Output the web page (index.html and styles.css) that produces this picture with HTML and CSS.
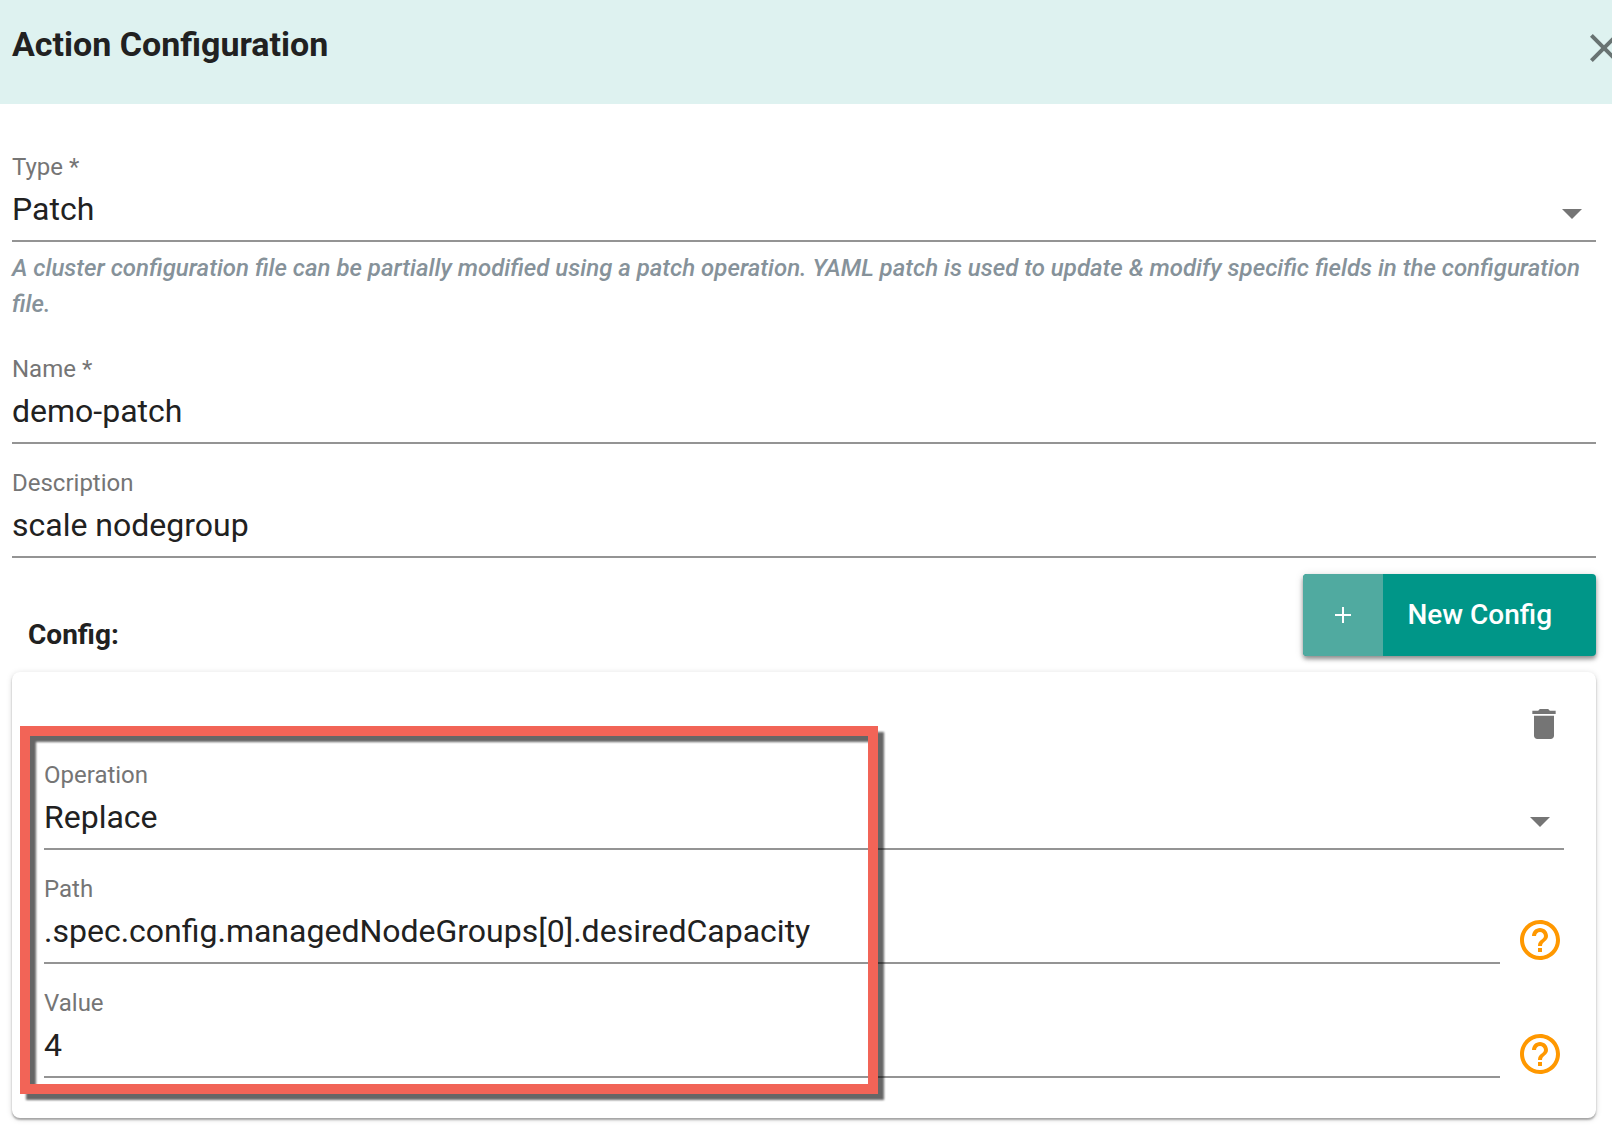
FILE: index.html
```html
<!DOCTYPE html>
<html lang="en">
<head>
<meta charset="utf-8">
<meta name="viewport" content="width=device-width, initial-scale=1">
<title>Action Configuration</title>
<link rel="stylesheet" href="styles.css">
</head>
<body>
<header class="dialog-header">
  <h1 class="dialog-title">Action Configuration</h1>
  <button class="icon-button close-button" type="button" aria-label="Close">
    <svg class="icon icon-large" viewBox="0 0 24 24"><path d="M19 6.41L17.59 5 12 10.59 6.41 5 5 6.41 10.59 12 5 17.59 6.41 19 12 13.41 17.59 19 19 17.59 13.41 12z"/></svg>
  </button>
</header>

<form class="dialog-form">
  <div class="field">
    <label class="field-label" for="type">Type *</label>
    <div class="select-wrap">
      <select class="field-input" id="type"><option>Patch</option></select>
      <svg class="icon icon-large select-arrow" viewBox="0 0 24 24"><path d="M7 10l5 5 5-5z"/></svg>
    </div>
    <p class="field-help">A cluster configuration file can be partially modified using a patch operation. YAML patch is used to update &amp; modify specific fields in the configuration file.</p>
  </div>

  <div class="field">
    <label class="field-label" for="name">Name *</label>
    <input class="field-input" id="name" type="text" value="demo-patch">
  </div>

  <div class="field">
    <label class="field-label" for="description">Description</label>
    <input class="field-input" id="description" type="text" value="scale nodegroup">
  </div>

  <section class="config">
    <div class="config-bar">
      <h2 class="config-title">Config:</h2>
      <button class="new-config" type="button">
        <span class="new-config-icon"><svg class="plus" viewBox="0 0 16 16"><path d="M8 0V16M0 8H16"/></svg></span>
        <span class="new-config-text">New Config</span>
      </button>
    </div>

    <div class="card">
      <div class="card-actions">
        <button class="icon-button" type="button" aria-label="Delete config">
          <svg class="icon icon-medium" viewBox="0 0 24 24"><path d="M6 19c0 1.100.9 2 2 2h8c1.100 0 2-.9 2-2V7H6v12zM19 4h-3.500l-1-1h-5l-1 1H5v2h14V4z"/></svg>
        </button>
      </div>

      <div class="card-fields">
        <div class="field">
          <label class="field-label" for="operation">Operation</label>
          <div class="select-wrap">
            <select class="field-input" id="operation"><option>Replace</option></select>
            <svg class="icon icon-large select-arrow" viewBox="0 0 24 24"><path d="M7 10l5 5 5-5z"/></svg>
          </div>
        </div>

        <div class="field-row">
          <div class="field">
            <label class="field-label" for="path">Path</label>
            <input class="field-input" id="path" type="text" value=".spec.config.managedNodeGroups[0].desiredCapacity">
          </div>
          <button class="icon-button help-button" type="button" aria-label="Help for path">
            <svg class="icon icon-large" viewBox="0 0 24 24"><path d="M11 18h2v-2h-2v2zm1-16C6.480 2 2 6.480 2 12s4.480 10 10 10 10-4.480 10-10S17.520 2 12 2zm0 18c-4.410 0-8-3.590-8-8s3.590-8 8-8 8 3.590 8 8-3.590 8-8 8zm0-14c-2.210 0-4 1.790-4 4h2c0-1.100.9-2 2-2s2 .9 2 2c0 2-3 1.750-3 5h2c0-2.250 3-2.500 3-5 0-2.210-1.790-4-4-4z"/></svg>
          </button>
        </div>

        <div class="field-row">
          <div class="field">
            <label class="field-label" for="value">Value</label>
            <input class="field-input" id="value" type="text" value="4">
          </div>
          <button class="icon-button help-button" type="button" aria-label="Help for value">
            <svg class="icon icon-large" viewBox="0 0 24 24"><path d="M11 18h2v-2h-2v2zm1-16C6.480 2 2 6.480 2 12s4.480 10 10 10 10-4.480 10-10S17.520 2 12 2zm0 18c-4.410 0-8-3.590-8-8s3.590-8 8-8 8 3.590 8 8-3.590 8-8 8zm0-14c-2.210 0-4 1.790-4 4h2c0-1.100.9-2 2-2s2 .9 2 2c0 2-3 1.750-3 5h2c0-2.250 3-2.500 3-5 0-2.210-1.790-4-4-4z"/></svg>
          </button>
        </div>
      </div>
      <div class="highlight"></div>
    </div>
  </section>
</form>
</body>
</html>
```
FILE: styles.css
```css
* {
  box-sizing: border-box;
}

body {
  margin: 0;
  overflow-x: hidden;
  background: #fff;
  color: #212121;
  font-family: Roboto, "Liberation Sans", sans-serif;
  font-size: 32px;
}

h1,
h2,
p {
  margin: 0;
}

button,
input,
select {
  font: inherit;
  color: inherit;
}

.dialog-header {
  display: flex;
  justify-content: space-between;
  align-items: flex-start;
  padding: 24px 0 32px 12px;
  background: #def2f0;
}

.dialog-title {
  font-size: 34px;
  line-height: 40px;
  font-weight: 700;
}

.icon-button {
  display: flex;
  padding: 0;
  border: 0;
  background: none;
  color: #757575;
  cursor: pointer;
}

/* The close button hangs over the right edge of the panel. */
.close-button {
  margin-right: -16px;
  color: #687372;
}

.icon {
  display: block;
  flex: none;
  fill: currentColor;
}

.icon-medium {
  width: 40px;
  height: 40px;
}

.icon-large {
  width: 48px;
  height: 48px;
}

.dialog-form {
  display: flex;
  flex-direction: column;
  gap: 28px;
  padding: 52px 16px 16px 12px;
}

.field {
  display: flex;
  flex-direction: column;
  flex: 1;
  min-width: 0;
}

.field-label {
  color: #757575;
  font-size: 24px;
  line-height: 22px;
}

.field-input {
  display: block;
  width: 100%;
  height: 64px;
  margin: 0;
  padding: 0;
  border: 0;
  border-bottom: 2px solid #949494;
  border-radius: 0;
  outline: 0;
  background: none;
  appearance: none;
}

.select-wrap {
  position: relative;
}

.select-arrow {
  position: absolute;
  top: 11px;
  right: 0;
  color: #757575;
  pointer-events: none;
}

.field-help {
  padding: 8px 0;
  color: #86929a;
  font-size: 24px;
  line-height: 36px;
  font-style: italic;
  font-weight: 500;
}

.config {
  display: flex;
  flex-direction: column;
  gap: 16px;
  margin-top: -12px;
}

.config-bar {
  display: flex;
  justify-content: space-between;
  align-items: flex-end;
}

.config-title {
  padding: 0 16px 4px;
  font-size: 28px;
  line-height: 34px;
  font-weight: 700;
}

.new-config {
  display: flex;
  min-height: 82px;
  padding: 0;
  overflow: hidden;
  border: 0;
  border-radius: 4px;
  background: #009688;
  box-shadow: 0 3px 4px rgba(0, 0, 0, 0.4), 0 1px 10px rgba(0, 0, 0, 0.12);
  color: #fff;
  font-size: 28px;
  font-weight: 500;
  cursor: pointer;
}

.new-config-icon {
  display: flex;
  justify-content: center;
  align-items: center;
  width: 80px;
  background: #50aaa0;
}

.plus {
  width: 16px;
  height: 16px;
  stroke: #fff;
  stroke-width: 2;
}

.new-config-text {
  align-self: center;
  padding: 0 44px 2px 24px;
}

.card {
  position: relative;
  padding: 32px 32px 40px;
  border-radius: 8px;
  background: #fff;
  box-shadow: 0 2px 2px rgba(0, 0, 0, 0.3), 0 1px 6px rgba(0, 0, 0, 0.14);
}

.card-actions {
  display: flex;
  justify-content: flex-end;
}

.card-fields {
  display: flex;
  flex-direction: column;
  gap: 28px;
  margin-top: 20px;
}

.field-row {
  display: flex;
  align-items: flex-end;
  gap: 16px;
}

.help-button {
  color: #ff9800;
}

/* Callout frame drawn over the patch fields. */
.highlight {
  position: absolute;
  top: 54px;
  bottom: 24px;
  left: 8px;
  width: 858px;
  border: 10px solid #f26457;
  filter: drop-shadow(6px 6px 1px rgba(0, 0, 0, 0.6));
  pointer-events: none;
}
```
